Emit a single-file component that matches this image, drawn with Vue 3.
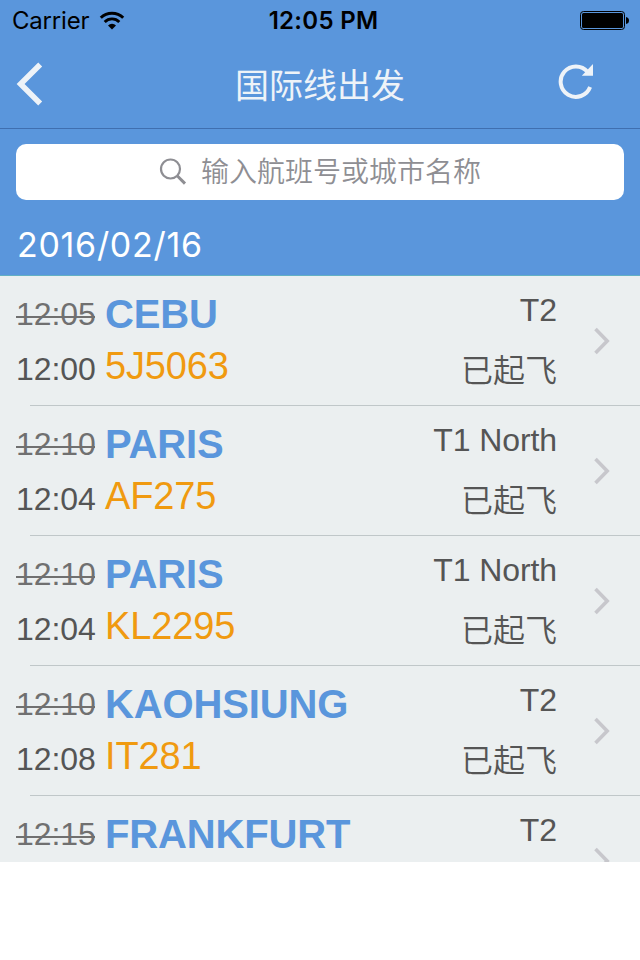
<template>
    <div class="screen">
        <header class="header">
            <div class="status-bar">
                <div class="carrier">
                    <span>Carrier</span>
                    <svg class="wifi" width="26" height="20" viewBox="0 0 26 20">
                        <path d="M1.8 6.7 A16 16 0 0 1 24.2 6.7" fill="none" stroke="#000" stroke-width="3" />
                        <path d="M5.7 10.9 A10.3 10.3 0 0 1 20.3 10.9" fill="none" stroke="#000" stroke-width="2.9" />
                        <path d="M9 14.4 A5.7 5.7 0 0 1 17 14.4 L13 18.6 Z" fill="#000" />
                    </svg>
                </div>
                <div class="clock">12:05 PM</div>
                <div class="battery">
                    <svg width="50" height="20" viewBox="0 0 50 20">
                        <rect x="0.5" y="0.5" width="44" height="18" rx="3" fill="none" stroke="#000" />
                        <rect x="2" y="2" width="41" height="15" rx="1.5" fill="#000" />
                        <path d="M46 6 Q49 6.5 49 9.5 Q49 12.5 46 13 Z" fill="#000" />
                    </svg>
                </div>
            </div>

            <div class="nav-bar">
                <svg class="nav-back" width="44" height="44" viewBox="0 0 44 44">
                    <path d="M40.2 2.5 L20.6 22 L40.2 41.5" fill="none" stroke="#eef3f8" stroke-width="5.6" />
                </svg>
                <h1 class="nav-title">国际线出发</h1>
                <svg class="nav-refresh" width="40" height="40" viewBox="0 0 40 40">
                    <path d="M30.6 12 A15.2 15.2 0 1 0 33.1 27" fill="none" stroke="#eef3f8" stroke-width="4" />
                    <path d="M36 4 V15.8 H24.8 Z" fill="#eef3f8" />
                </svg>
            </div>

            <div class="search-box">
                <svg width="28" height="28" viewBox="0 0 28 28">
                    <circle cx="11.5" cy="11" r="9.5" fill="none" stroke="#8e8e93" stroke-width="2.2" />
                    <path d="M18.2 17.8 L26 25.6" stroke="#8e8e93" stroke-width="3" />
                </svg>
                <span>输入航班号或城市名称</span>
            </div>

            <div class="date">2016/02/16</div>
        </header>

        <ul class="flight-list">
            <li v-for="(flight, index) in flights" :key="index" class="flight">
                <div class="times">
                    <span class="planned">{{ flight.planned }}</span>
                    <span v-if="flight.actual">{{ flight.actual }}</span>
                </div>
                <div class="route">
                    <span class="city">{{ flight.city }}</span>
                    <span v-if="flight.number" class="number">{{ flight.number }}</span>
                </div>
                <div class="state">
                    <span class="terminal">{{ flight.terminal }}</span>
                    <span v-if="flight.status" class="status">{{ flight.status }}</span>
                </div>
                <svg class="chevron" width="18" height="28" viewBox="0 0 18 28">
                    <path d="M1.5 2 L13.2 14 L1.5 26" fill="none" stroke="#c7c7cc" stroke-width="3.6" />
                </svg>
            </li>
        </ul>
    </div>
</template>

<script setup>
import { ref } from 'vue'

const flights = ref([
    { planned: '12:05', actual: '12:00', city: 'CEBU', number: '5J5063', terminal: 'T2', status: '已起飞' },
    { planned: '12:10', actual: '12:04', city: 'PARIS', number: 'AF275', terminal: 'T1 North', status: '已起飞' },
    { planned: '12:10', actual: '12:04', city: 'PARIS', number: 'KL2295', terminal: 'T1 North', status: '已起飞' },
    { planned: '12:10', actual: '12:08', city: 'KAOHSIUNG', number: 'IT281', terminal: 'T2', status: '已起飞' },
    { planned: '12:15', city: 'FRANKFURT', terminal: 'T2' }
])
</script>

<style>
body {
    background: #fff;
}
</style>

<style scoped>
.screen {
    width: 640px;
    height: 862px;
    overflow: hidden;
    display: flex;
    flex-direction: column;
    background: #ebeff0;
    font-family: "Liberation Sans", "Noto Sans CJK SC", sans-serif;
}

.header {
    flex: none;
    height: 275px;
    background: #5a96dc;
    border-bottom: 1px solid #62b0c4;
}

.status-bar {
    display: grid;
    grid-template-columns: 1fr auto 1fr;
    align-items: center;
    box-sizing: border-box;
    height: 40px;
    padding: 1px 10px 0 12px;
    font-family: Inter, sans-serif;
    font-size: 24px;
    line-height: 38px;
    color: #000;
}

.carrier {
    display: flex;
    align-items: center;
    gap: 10px;
    letter-spacing: -0.2px;
}

.clock {
    padding-left: 5px;
    font-weight: 600;
    letter-spacing: 0.3px;
}

.battery {
    display: flex;
    justify-content: flex-end;
}

.nav-bar {
    display: grid;
    grid-template-columns: 120px 1fr 120px;
    align-items: center;
    height: 88px;
    border-bottom: 1px solid #3f6fb0;
}

.nav-title {
    margin: 0;
    padding-top: 3px;
    font-size: 34px;
    line-height: 50px;
    font-weight: 400;
    text-align: center;
    color: #eef3f8;
}

.nav-refresh {
    margin: 0 0 9px 37px;
}

.search-box {
    display: flex;
    align-items: center;
    justify-content: center;
    gap: 14px;
    height: 56px;
    margin: 15px 16px 0;
    border-radius: 10px;
    background: #fff;
    font-size: 28px;
    font-weight: 350;
    color: #8e8e93;
}

.search-box span {
    padding-bottom: 4px;
}

.date {
    padding: 22px 0 0 17px;
    font-family: Inter, sans-serif;
    font-size: 34px;
    line-height: 46px;
    letter-spacing: 0.7px;
    color: #fff;
}

.flight-list {
    margin: 0;
    padding: 0;
    list-style: none;
}

.flight {
    display: flex;
    align-items: flex-start;
    height: 130px;
    color: #555;
    font-size: 32px;
    line-height: 36px;
    background: linear-gradient(#c0c7c9, #c0c7c9) 30px 129px / 610px 1px no-repeat;
}

.times,
.route,
.state {
    display: flex;
    flex-direction: column;
}

.times {
    gap: 19px;
    width: 89px;
    padding: 20px 0 0 16px;
    letter-spacing: -0.1px;
}

.planned {
    position: relative;
    align-self: flex-start;
    color: #707070;
}

.planned::after {
    content: "";
    position: absolute;
    left: 0;
    right: 1px;
    top: 20px;
    height: 2px;
    background: #707070;
}

.route {
    flex: 1;
    gap: 8px;
    padding-top: 16px;
    line-height: 44px;
    letter-spacing: -0.15px;
}

.city {
    font-size: 40px;
    font-weight: bold;
    color: #5a96dc;
}

.number {
    font-size: 38px;
    color: #f09a10;
}

.state {
    align-items: flex-end;
    gap: 25px;
    padding-top: 16px;
}

.terminal {
    letter-spacing: -0.1px;
}

.status {
    font-weight: 350;
}

.chevron {
    margin: 51px 28px 0 37px;
}
</style>
